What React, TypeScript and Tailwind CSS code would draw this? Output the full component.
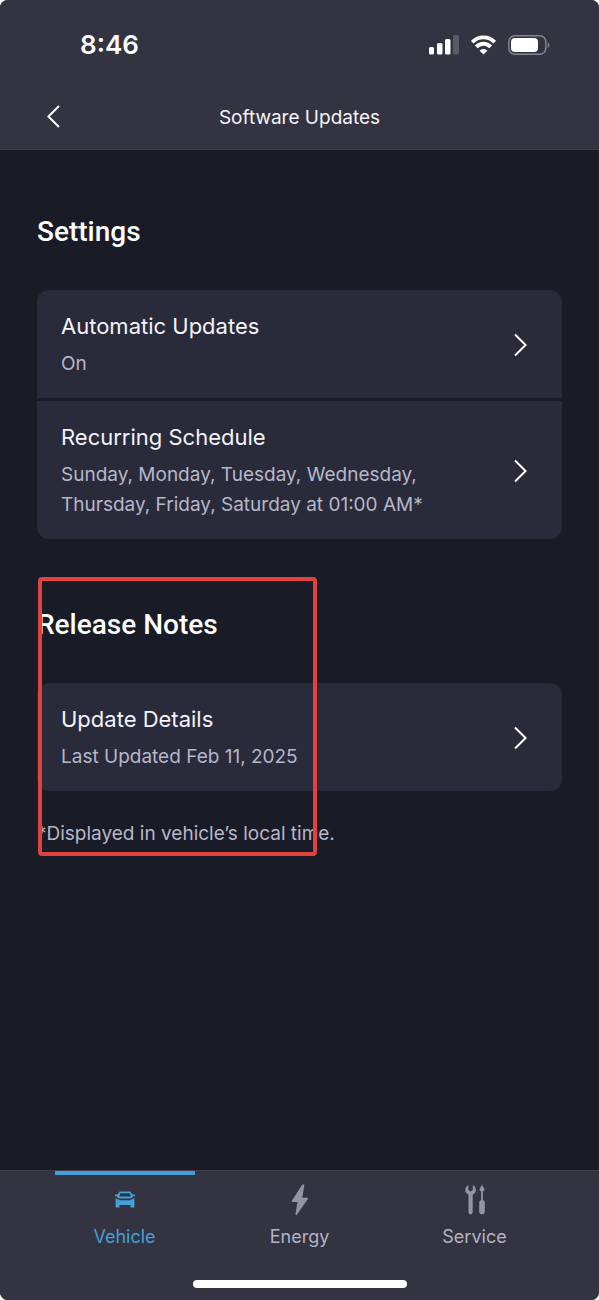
// Software update settings screen of the vehicle companion app.
// Status bar + title on top, setting cards in the middle, tab bar at the bottom.

import type { ReactNode } from 'react'

interface SettingRowProps {
  title: string
  detail: string
  className?: string
}

interface TabProps {
  label: string
  icon: ReactNode
  active?: boolean
}

function StatusIcons() {
  return (
    <div className="flex items-center gap-3">
      <svg width="30" height="20" viewBox="0 0 30 20" fill="white" aria-label="Signal strength">
        <rect x="0" y="12" width="5" height="7.5" rx="1.5" />
        <rect x="8" y="8" width="5.5" height="11.5" rx="1.5" />
        <rect x="16" y="4" width="5.5" height="15.5" rx="1.5" />
        <rect x="24" y="0" width="6" height="19.5" rx="1.5" fill="#5b5b66" />
      </svg>
      <svg width="25" height="20" viewBox="0 0 25 20" aria-label="Wi-Fi">
        <g fill="none" stroke="white" strokeWidth="3.8">
          <path d="M1.2 7.2C7.4 0.8 17.6 0.8 23.8 7.2" />
          <path d="M5.3 11.8C9.3 7.7 15.7 7.7 19.7 11.8" />
        </g>
        <path d="M12.5 19.6L8.6 15.7C10.8 13.3 14.2 13.3 16.4 15.7Z" fill="white" />
      </svg>
      <svg width="42" height="20" viewBox="0 0 42 20" aria-label="Battery">
        <rect x="0.8" y="0.8" width="37" height="18.4" rx="6" fill="none" stroke="#85858f" strokeWidth="1.5" />
        <rect x="3" y="3" width="27" height="14" rx="4" fill="white" />
        <path d="M39.6 7.2C42 8.4 42 11.8 39.6 13Z" fill="#85858f" />
      </svg>
    </div>
  )
}

function ChevronRight() {
  return (
    <svg width="14" height="24" viewBox="0 0 14 24" fill="none" stroke="white" strokeWidth="2" className="shrink-0">
      <path d="M2 1.5L12.6 12L2 22.5" />
    </svg>
  )
}

function SettingRow({ title, detail, className = '' }: SettingRowProps) {
  return (
    <button
      type="button"
      className={`flex w-full items-center justify-between gap-6 bg-[#292a3a] pb-[19px] pl-6 pr-[35px] pt-5 text-left ${className}`}
    >
      <span className="flex flex-col gap-[7px]">
        <span className="text-[22px] leading-8 text-[#f3f3fa]">{title}</span>
        <span className="text-[19px] leading-[30px] text-[#b7b7ca]">{detail}</span>
      </span>
      <ChevronRight />
    </button>
  )
}

function CarIcon() {
  return (
    <svg width="22" height="32" viewBox="0 0 22 32" fill="currentColor">
      <path d="M5.6 7.4H16.4L18.4 10.6H21V12.2H19.2C18.6 13.8 17.6 14.4 16 14.4H6C4.4 14.4 3.4 13.8 2.8 12.2H1V10.6H3.6ZM6.4 9.2L5.2 12.6H16.8L15.6 9.2Z" fillRule="evenodd" />
      <path d="M1.6 14.2L6.2 16.2H15.8L20.4 14.2V23.4H16.6V21H5.4V23.4H1.6Z" />
    </svg>
  )
}

function BoltIcon() {
  return (
    <svg width="18" height="32" viewBox="0 0 18 32" fill="currentColor" stroke="currentColor" strokeWidth="1.5" strokeLinejoin="round">
      <path d="M11.8 1.2L1.5 17.2H7.4L5.2 30.4L16.3 14.5H10.4L12.6 1.2Z" />
    </svg>
  )
}

function ToolsIcon() {
  return (
    <svg width="20" height="32" viewBox="0 0 20 32" fill="currentColor">
      <path d="M3.4 1.2C1.5 2 0.2 3.8 0.2 5.8C0.2 8 1.5 9.8 3.5 10.8V28.1C3.5 31.2 7.7 31.2 7.7 28.1V10.8C9.7 9.8 11 8 11 5.8C11 3.8 9.7 2 7.8 1.2V6L5.6 7.4L3.4 6Z" />
      <path d="M17 0.8L19.4 5V6.6L17.9 7.6V16.2C19.2 16.6 19.8 17.4 19.8 18.6V27.8C19.8 31.2 14.2 31.2 14.2 27.8V18.6C14.2 17.4 14.8 16.6 16.1 16.2V7.6L14.6 6.6V5Z" />
    </svg>
  )
}

function Tab({ label, icon, active = false }: TabProps) {
  return (
    <a
      href="#"
      aria-current={active ? 'page' : undefined}
      className={`flex flex-col items-center ${active ? 'text-[#459fd8]' : 'text-[#9393a5]'}`}
    >
      <span className={`h-1 w-[80%] ${active ? 'bg-[#459fd8]' : ''}`} />
      <span className="mt-[9px]">{icon}</span>
      <span className={`mt-[9px] font-[Inter,sans-serif] text-lg leading-6 ${active ? '' : 'text-[#b3b3c4]'}`}>{label}</span>
    </a>
  )
}

export default function App() {
  return (
    <div className="flex min-h-screen flex-col overflow-hidden rounded-lg bg-[#191b26] font-[Inter,sans-serif]">
      <header className="border-b border-[#3b3b49] bg-[#333341]">
        <div className="flex items-center justify-between pl-20 pr-[49px] pt-[25px]">
          <span className="text-[26px] font-semibold leading-10 text-white">8:46</span>
          <StatusIcons />
        </div>
        <div className="mt-8 grid grid-cols-[1fr_auto_1fr] items-center px-[47px] pb-[11px]">
          <button type="button" aria-label="Back" className="justify-self-start pb-[10px] pt-2">
            <svg width="13" height="23" viewBox="0 0 13 23" fill="none" stroke="white" strokeWidth="2">
              <path d="M12 1L1.4 11.5L12 22" />
            </svg>
          </button>
          <h1 className="pt-px text-[19px] leading-7 text-[#f3f3fa]">Software Updates</h1>
        </div>
      </header>

      <main className="flex-1 px-[37px] pt-16">
        <section>
          <h2 className="font-[Roboto,sans-serif] text-[28px] font-medium leading-9 text-white">Settings</h2>
          <div className="mt-10 flex flex-col gap-[3px]">
            <SettingRow title="Automatic Updates" detail="On" className="rounded-t-xl" />
            <SettingRow
              title="Recurring Schedule"
              detail="Sunday, Monday, Tuesday, Wednesday, Thursday, Friday, Saturday at 01:00 AM*"
              className="rounded-b-xl"
            />
          </div>
        </section>

        <section className="relative mt-[38px] pt-[30px]">
          <h2 className="font-[Roboto,sans-serif] text-[28px] font-medium leading-9 text-white">Release Notes</h2>
          <div className="mt-10">
            <SettingRow title="Update Details" detail="Last Updated Feb 11, 2025" className="rounded-xl" />
          </div>
          <p className="mt-[29px] pb-2 text-[19px] leading-7 text-[#b7b7ca]">*Displayed in vehicle’s local time.</p>
          {/* highlight frame over the release notes */}
          <div className="pointer-events-none absolute inset-y-0 left-px w-[279px] rounded-sm border-4 border-[#e0433f]" />
        </section>
      </main>

      <footer className="border-t border-[#3e3e4b] bg-[#333341]">
        <nav className="grid grid-cols-3 px-[37px]">
          <Tab label="Vehicle" icon={<CarIcon />} active />
          <Tab label="Energy" icon={<BoltIcon />} />
          <Tab label="Service" icon={<ToolsIcon />} />
        </nav>
        <div className="mx-auto mb-3 mt-[31px] h-2 w-[214px] rounded-full bg-white" />
      </footer>
    </div>
  )
}
